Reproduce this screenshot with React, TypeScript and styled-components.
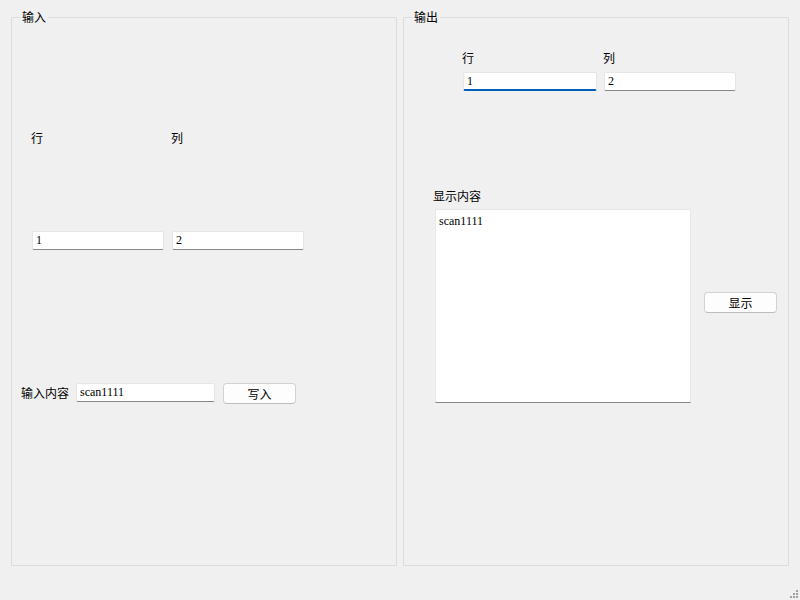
import * as React from 'react';
import styled, { createGlobalStyle } from 'styled-components';

const GlobalStyle = createGlobalStyle`
  html, body {
    margin: 0;
    padding: 0;
    background: #f0f0f0;
  }
  * {
    box-sizing: border-box;
  }
`;

const Window = styled.div`
  position: relative;
  width: 800px;
  height: 600px;
  background: #f0f0f0;
  padding: 10px 12px 34px 11px;
  display: grid;
  grid-template-columns: 386px 386px;
  column-gap: 6px;
  font-family: 'Noto Sans CJK SC', 'Noto Sans', sans-serif;
  font-size: 12px;
  color: #000;
`;

const GroupBox = styled.fieldset`
  margin: 0;
  padding: 0;
  min-width: 0;
  border: 1px solid #dcdcdc;
  display: flex;
  flex-direction: column;
`;

const GroupTitle = styled.legend`
  margin-left: 8px;
  padding: 0 2px;
  font-size: 12px;
  line-height: 14px;
`;

const Section = styled.div<{ $top: number; $left: number }>`
  margin-top: ${p => p.$top}px;
  padding-left: ${p => p.$left}px;
  display: flex;
  align-items: flex-start;
`;

const FieldGrid = styled.div<{ $col: number; $gap: number }>`
  display: grid;
  grid-template-columns: ${p => p.$col}px ${p => p.$col}px;
  column-gap: ${p => p.$gap}px;
`;

const ColLabel = styled.div`
  line-height: 14px;
  margin-left: -1px;
`;

const LineEdit = styled.div<{ $width: number; $focused?: boolean }>`
  width: ${p => p.$width}px;
  height: 19px;
  background: #fff;
  border: 1px solid #e6e6e6;
  border-bottom: ${p => (p.$focused ? '2px solid #005fb8' : '1px solid #868686')};
  border-radius: 2px;
  padding: 0 3px;
  display: flex;
  align-items: center;
  font-family: 'Liberation Serif', serif;
  font-size: 12px;
`;

const InlineLabel = styled.div`
  line-height: 20px;
  margin-right: 7px;
`;

const PushButton = styled.div<{ $offset?: number; $gap?: number }>`
  width: 73px;
  height: 21px;
  margin-left: ${p => p.$gap || 8}px;
  margin-top: ${p => p.$offset || 0}px;
  background: #fdfdfd;
  border: 1px solid #d2d2d2;
  border-bottom-color: #bdbdbd;
  border-radius: 4px;
  display: flex;
  align-items: center;
  justify-content: center;
  font-size: 12px;
  flex-shrink: 0;
`;

const Caption = styled.div`
  line-height: 14px;
  padding-left: 29px;
`;

const TextArea = styled.div`
  width: 256px;
  height: 194px;
  background: #fff;
  border: 1px solid #e8e8e8;
  border-bottom: 1px solid #868686;
  padding: 4px 3px;
  font-family: 'Liberation Serif', serif;
  font-size: 12px;
  line-height: 14px;
`;

const SizeGrip = styled.svg`
  position: absolute;
  right: 2px;
  bottom: 2px;
`;

const grip: [number, number][] = [
  [8, 0],
  [5, 3],
  [8, 3],
  [2, 6],
  [5, 6],
  [8, 6],
];

const App: React.FC = () => (
  <Window>
    <GlobalStyle />
    <GroupBox>
      <GroupTitle>输入</GroupTitle>
      <Section $top={107} $left={20}>
        <FieldGrid $col={132} $gap={8}>
          <ColLabel>行</ColLabel>
          <ColLabel>列</ColLabel>
        </FieldGrid>
      </Section>
      <Section $top={86} $left={20}>
        <FieldGrid $col={132} $gap={8}>
          <LineEdit $width={132}>1</LineEdit>
          <LineEdit $width={132}>2</LineEdit>
        </FieldGrid>
      </Section>
      <Section $top={133} $left={9}>
        <InlineLabel>输入内容</InlineLabel>
        <LineEdit $width={139}>scan1111</LineEdit>
        <PushButton>写入</PushButton>
      </Section>
    </GroupBox>
    <GroupBox>
      <GroupTitle>输出</GroupTitle>
      <Section $top={27} $left={59}>
        <FieldGrid $col={134} $gap={7}>
          <ColLabel>行</ColLabel>
          <ColLabel>列</ColLabel>
        </FieldGrid>
      </Section>
      <Section $top={7} $left={59}>
        <FieldGrid $col={134} $gap={7}>
          <LineEdit $width={134} $focused>
            1
          </LineEdit>
          <LineEdit $width={132}>2</LineEdit>
        </FieldGrid>
      </Section>
      <Section $top={98} $left={0}>
        <Caption>显示内容</Caption>
      </Section>
      <Section $top={6} $left={31}>
        <TextArea>scan1111</TextArea>
        <PushButton $offset={83} $gap={13}>
          显示
        </PushButton>
      </Section>
    </GroupBox>
    <SizeGrip width="10" height="8" viewBox="0 0 10 8">
      {grip.map(([x, y]) => (
        <rect key={`${x}-${y}`} x={x} y={y} width="2" height="2" fill="#a0a0a0" />
      ))}
    </SizeGrip>
  </Window>
);

export default App;
